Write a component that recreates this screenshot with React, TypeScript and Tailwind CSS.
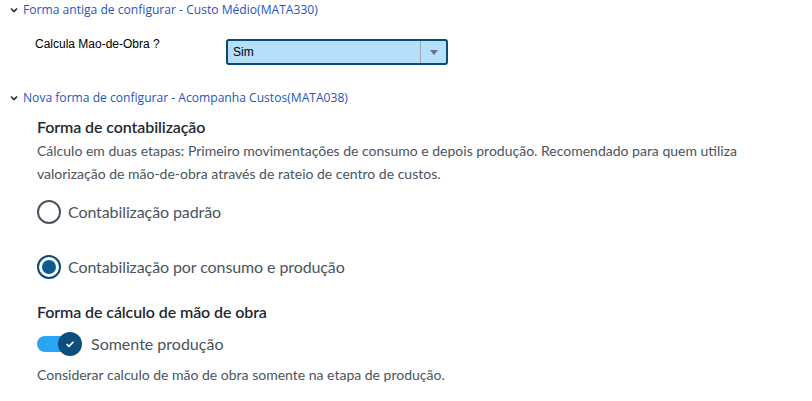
import React from 'react';

function Chevron() {
  return (
    <svg width="8" height="6" viewBox="0 0 8 6" className="shrink-0">
      <path d="M1 1.5 L4 4.5 L7 1.5" fill="none" stroke="#1f2937" strokeWidth="1.6" />
    </svg>
  );
}

function SectionTitle({ text }: { text: string }) {
  return (
    <div className="flex items-center gap-[5px] pl-[10px] h-[18px]">
      <Chevron />
      <span className="text-[12.1px] text-[#1f55c4] font-['Open_Sans',sans-serif]">{text}</span>
    </div>
  );
}

function Radio({ checked, label }: { checked: boolean; label: string }) {
  return (
    <div className="flex items-center gap-[7px] h-[24px]">
      <span
        className={`flex items-center justify-center w-[24px] h-[24px] rounded-full border-2 ${
          checked ? 'border-[#0c4a78]' : 'border-[#4a5560]'
        }`}
      >
        {checked && <span className="w-[14px] h-[14px] rounded-full bg-[#0c5a92]" />}
      </span>
      <span className="text-[16px] tracking-[-0.1px] text-[#4a5560]">{label}</span>
    </div>
  );
}

export default function App() {
  return (
    <div className="w-[812px] h-[401px] bg-white overflow-hidden pt-[1px] font-['Lato',sans-serif]">
      <SectionTitle text="Forma antiga de configurar - Custo Médio(MATA330)" />

      <div className="flex items-start mt-[17px] pl-[35px]">
        <span className="w-[191px] text-[12px] leading-[16px] text-black font-['Liberation_Sans',Arial,sans-serif]">
          Calcula Mao-de-Obra ?
        </span>
        <div className="flex items-center w-[222px] h-[26px] mt-[3px] rounded-[3px] border-2 border-[#0b4a72] bg-[#b5e0fc]">
          <span className="flex-1 pl-[5px] text-[12px] text-black font-['Liberation_Sans',Arial,sans-serif]">Sim</span>
          <span className="w-px h-full bg-[#9aa8b2]" />
          <span className="flex items-center justify-center w-[25px]">
            <svg width="8" height="5" viewBox="0 0 8 5">
              <path d="M0 0 H8 L4 5 Z" fill="#6b7280" />
            </svg>
          </span>
        </div>
      </div>

      <div className="mt-[24px]">
        <SectionTitle text="Nova forma de configurar - Acompanha Custos(MATA038)" />
      </div>

      <div className="pl-[37px] pr-[40px]">
        <h3 className="mt-[9px] text-[16px] leading-[22px] tracking-[-0.1px] font-semibold text-[#1f2a33]">Forma de contabilização</h3>
        <p className="mt-[1px] text-[14px] leading-[23px] text-[#4a5560]">
          Cálculo em duas etapas: Primeiro movimentações de consumo e depois produção. Recomendado para quem utiliza
          valorização de mão-de-obra através de rateio de centro de custos.
        </p>

        <div className="mt-[15px] flex flex-col gap-[31px]">
          <Radio checked={false} label="Contabilização padrão" />
          <Radio checked label="Contabilização por consumo e produção" />
        </div>

        <h3 className="mt-[22px] text-[16px] leading-[22px] tracking-[-0.1px] font-semibold text-[#1f2a33]">Forma de cálculo de mão de obra</h3>

        <div className="mt-[9px] flex items-center gap-[9px] h-[24px]">
          <span className="relative w-[45px] h-[24px]">
            <span className="absolute left-0 top-[4px] w-[40px] h-[16px] rounded-full bg-[#2aa5f4]" />
            <span className="absolute right-0 top-0 w-[24px] h-[24px] rounded-full bg-[#0c4f7f] flex items-center justify-center">
              <svg width="10" height="8" viewBox="0 0 10 8">
                <path d="M1.5 4 L4 6.3 L8.5 1.7" fill="none" stroke="white" strokeWidth="1.6" />
              </svg>
            </span>
          </span>
          <span className="text-[16px] text-[#4a5560]">Somente produção</span>
        </div>

        <p className="mt-[8px] text-[14px] leading-[22px] text-[#4a5560]">
          Considerar calculo de mão de obra somente na etapa de produção.
        </p>
      </div>
    </div>
  );
}
